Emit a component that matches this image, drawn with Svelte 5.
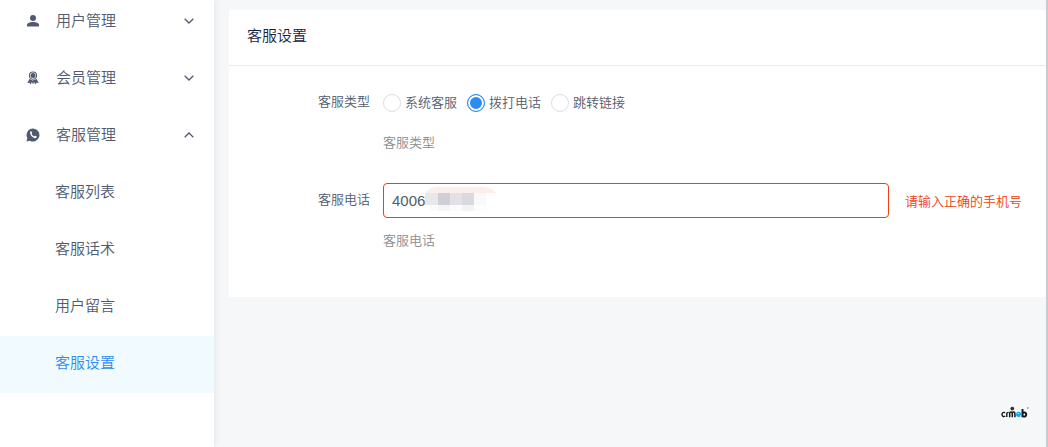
<script>
  let serviceType = 'phone';
  let phone = '4006';

  const menus = [
    { title: '用户管理', icon: 'user', open: false },
    { title: '会员管理', icon: 'medal', open: false },
    {
      title: '客服管理',
      icon: 'phone',
      open: true,
      children: ['客服列表', '客服话术', '用户留言', '客服设置']
    }
  ];
  const active = '客服设置';

  const types = [
    { value: 'system', label: '系统客服' },
    { value: 'phone', label: '拨打电话' },
    { value: 'link', label: '跳转链接' }
  ];

  // Grey blocks that hide the rest of the number
  const blocks = [
    [0, 7, 13, 12, '#e7e8ea'],
    [13, 7, 12, 12, '#cfd0d7'],
    [25, 7, 12, 12, '#e2e2e4'],
    [37, 7, 12, 12, '#d9dadf'],
    [49, 7, 12, 12, '#f8f9fb'],
    [5, 19, 8, 6, '#fafbfc'],
    [13, 19, 12, 6, '#f5f6f8'],
    [25, 19, 12, 6, '#fbfcfc'],
    [37, 19, 12, 6, '#f2f3f5'],
    [49, 19, 12, 6, '#fcfdfd']
  ];
</script>

<div class="layout">
  <nav class="sidebar">
    <ul class="menu">
      {#each menus as menu}
        <li>
          <button class="menu-title" aria-expanded={menu.open}>
            <svg class="menu-icon" viewBox="0 0 14 14" aria-hidden="true">
              {#if menu.icon === 'user'}
                <circle cx="7" cy="4" r="3" />
                <path d="M1 12.5V11c0-2 2.6-3 6-3s6 1 6 3v1.500z" />
              {:else if menu.icon === 'medal'}
                <path fill-rule="evenodd" d="M7 .5a4.100 4.100 0 1 0 0 8.200A4.100 4.100 0 0 0 7 .5zm0 1a3.100 3.100 0 1 1 0 6.200 3.100 3.100 0 0 1 0-6.200z" />
                <circle cx="7" cy="4.600" r="2.500" />
                <path d="M3.400 8 1.300 12l2.200-.2 1.200 1.700L6.700 9.300zM10.600 8l2.100 4-2.200-.2-1.200 1.700L7.300 9.300zM6.200 9.300h1.600v3.200H6.200z" />
              {:else}
                <path d="M7 .5A6.500 6.500 0 0 0 1.300 10L.5 13.500l3.300-.8A6.500 6.500 0 1 0 7 .5z" />
                <path class="handset" d="M4.300 3.600c.5-.6 1-.5 1.200 0l.6 1.300c.1.500-.5.800-.5 1.200.4 1 1.300 1.800 2.400 2.300.4 0 .7-.8 1.200-.7l1.400.7c.4.300.2 1-.3 1.400C8 11.300 3.200 7.500 4.300 3.600z" />
              {/if}
            </svg>
            <span>{menu.title}</span>
            <svg class="arrow" class:open={menu.open} viewBox="0 0 10 6" aria-hidden="true">
              <path d="M.7.7 5 5 9.300.7" />
            </svg>
          </button>
          {#if menu.open}
            <ul class="submenu">
              {#each menu.children as child}
                <li><a href="#{child}" class:active={child === active}>{child}</a></li>
              {/each}
            </ul>
          {/if}
        </li>
      {/each}
    </ul>
  </nav>

  <main>
    <section class="card">
      <h1>客服设置</h1>
      <form>
        <div class="form-item">
          <span class="label" id="type-label">客服类型</span>
          <div class="content">
            <div class="radios" role="radiogroup" aria-labelledby="type-label">
              {#each types as type}
                <label>
                  <input type="radio" name="type" value={type.value} bind:group={serviceType} />
                  {type.label}
                </label>
              {/each}
            </div>
            <p class="tip">客服类型</p>
          </div>
        </div>
        <div class="form-item">
          <label class="label tall" for="phone">客服电话</label>
          <div class="content">
            <div class="field">
              <div class="input-wrap">
                <input id="phone" type="text" bind:value={phone} aria-invalid="true" aria-describedby="phone-error" />
                <svg class="mask" viewBox="0 0 72 26" aria-hidden="true">
                  <path d="M0 7C4 2 8 1 14 1h44q9 0 13 6z" fill="#fdeeeb" />
                  {#each blocks as [x, y, w, h, fill]}
                    <rect {x} {y} width={w} height={h} {fill} />
                  {/each}
                </svg>
              </div>
              <span class="error" id="phone-error">请输入正确的手机号</span>
            </div>
            <p class="tip">客服电话</p>
          </div>
        </div>
      </form>
    </section>

    <footer>
      <svg class="logo" viewBox="0 0 28 13" role="img" aria-label="crmeb">
        <g fill="none" stroke="#17181a">
          <path d="M4.200 6.600C2 5.800 1 7 1 8.600c0 1.700 1.500 2.500 3.200 1.600" stroke-width="1.400" />
          <path d="M5.800 11V8q0-1.700 1.900-1.600" stroke-width="1.400" />
          <path d="M8.700 11.200V7.400q0-1.300 1.300-1.300t1.300 1.300v3.800M11.300 7.400q0-1.300 1.300-1.300t1.300 1.300v3.800" stroke-width="1.500" />
          <path d="M21.500 3v8.200M21.500 7.200q3.700-1.700 3.700 1.300 0 3-3.700 1.600" stroke-width="2" />
        </g>
        <circle cx="11.300" cy="2.600" r="1.900" fill="#333" />
        <path d="M15.900 8.700h3.600q0-2.300-1.900-2.300t-1.900 2.300q.2 2.200 3.500 1.400" fill="none" stroke="#18a9ec" stroke-width="1.500" />
        <rect x="26" y="1" width="1.500" height="2" fill="#aaa" />
      </svg>
    </footer>
  </main>
  <div class="scrollbar"></div>
</div>

<style>
  :global(body) {
    margin: 0;
    background: #f5f7f9;
  }

  .layout {
    display: flex;
    min-height: 100vh;
    font-family: "Liberation Sans", "Noto Sans CJK SC", sans-serif;
    font-size: 13px;
    font-weight: 350;
    color: #515a6e;
  }

  .sidebar {
    flex: 0 0 214px;
    background: #fff;
    box-shadow: 2px 0 6px rgba(0, 21, 41, 0.06);
    overflow: hidden;
  }

  ul {
    list-style: none;
    margin: 0;
    padding: 0;
  }

  /* the list is scrolled a little past its first row */
  .menu {
    margin-top: -7px;
  }

  .menu-title,
  .submenu a {
    display: flex;
    align-items: center;
    box-sizing: border-box;
    width: 100%;
    height: 57px;
    border: 0;
    background: none;
    font: inherit;
    font-size: 15px;
    color: inherit;
    text-decoration: none;
    cursor: pointer;
  }

  .menu-title {
    padding: 0 20px 2px 26px;
  }

  .menu-title span {
    padding-bottom: 2px;
  }

  .menu-icon {
    width: 14px;
    height: 14px;
    margin-right: 16px;
    fill: #515a6e;
  }

  .handset {
    fill: #fff;
  }

  .arrow {
    width: 10px;
    height: 6px;
    margin-left: auto;
    fill: none;
    stroke: #515a6e;
    stroke-width: 1.3;
  }

  .arrow.open {
    transform: rotate(180deg);
  }

  .submenu {
    padding-top: 1px;
  }

  .submenu a {
    padding: 0 20px 6px 55px;
  }

  .submenu a.active {
    background: #f0faff;
    color: #2d8cf0;
  }

  main {
    flex: 1;
    min-width: 0;
    display: flex;
    flex-direction: column;
    padding: 10px 0 0 15px;
  }

  .card {
    background: #fff;
    padding-bottom: 46px;
  }

  h1 {
    margin: 0;
    padding: 14px 18px 17px;
    border-bottom: 1px solid #e8eaec;
    font-size: 15px;
    font-weight: inherit;
    line-height: 24px;
    color: #17233d;
  }

  form {
    padding: 20px 24px 0 0;
  }

  .form-item {
    display: flex;
    margin-bottom: 30px;
  }

  .form-item:last-child {
    margin-bottom: 0;
  }

  .label {
    flex: 0 0 141px;
    margin-right: 13px;
    line-height: 32px;
    text-align: right;
  }

  .label.tall {
    line-height: 34px;
  }

  .content {
    flex: 1;
    min-width: 0;
  }

  .radios {
    display: flex;
    gap: 10px;
    height: 34px;
  }

  .radios label {
    display: flex;
    align-items: center;
    gap: 4px;
    line-height: 16px;
  }

  input[type='radio'] {
    appearance: none;
    box-sizing: border-box;
    width: 18px;
    height: 18px;
    margin: 0;
    border: 1px solid #dcdee2;
    border-radius: 50%;
    background: #fff;
  }

  input[type='radio']:checked {
    border-color: #2d8cf0;
    background: #2d8cf0;
    box-shadow: inset 0 0 0 2px #fff;
  }

  .tip {
    margin: 13px 0 0;
    line-height: 20px;
    color: #8c8c8c;
  }

  .field {
    display: flex;
    align-items: center;
    gap: 16px;
  }

  .input-wrap {
    position: relative;
    flex: 1;
    min-width: 0;
  }

  input[type='text'] {
    display: block;
    box-sizing: border-box;
    width: 100%;
    height: 35px;
    padding: 0 8px;
    border: 1px solid #ed4014;
    border-radius: 4px;
    outline: 0;
    font: inherit;
    font-size: 15px;
    color: #515a6e;
  }

  .mask {
    position: absolute;
    top: 3px;
    left: 42px;
    width: 72px;
    height: 26px;
  }

  .error {
    color: #ed4014;
    white-space: nowrap;
  }

  footer {
    display: flex;
    justify-content: flex-end;
    margin-top: auto;
    padding: 0 17px 28px;
  }

  .logo {
    width: 28px;
    height: 13px;
  }

  .scrollbar {
    flex: 0 0 2px;
    background: #c8ccd2;
  }
</style>
